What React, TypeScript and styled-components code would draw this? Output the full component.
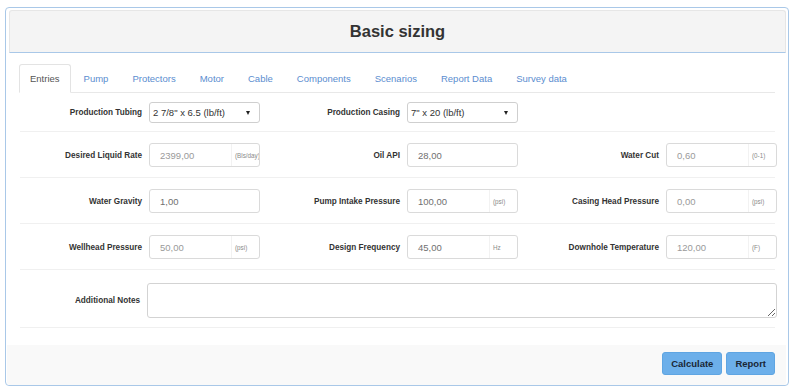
import React from "react";
import styled, { createGlobalStyle } from "styled-components";

const GlobalStyle = createGlobalStyle`
  html, body { margin: 0; padding: 0; background: #ffffff; }
  body { font-family: "Liberation Sans", Arial, sans-serif; color: #333; }
  * { box-sizing: border-box; }
`;

const Panel = styled.div`
  margin: 7px 0 0 5px;
  width: 784px;
  height: 379px;
  border: 1px solid #a9c8e8;
  border-radius: 4px;
  padding: 2px 2px 0 3px;
  display: flex;
  flex-direction: column;
  background: #fff;
`;

const Header = styled.div`
  height: 43px;
  background: #f4f4f4;
  border: 1px solid #e6e6e6;
  border-bottom: 1px solid #a9c8e8;
  border-radius: 3px 3px 0 0;
  display: flex;
  align-items: center;
  justify-content: center;
`;

const Title = styled.h1`
  margin: 0;
  font-size: 16.5px;
  font-weight: bold;
  color: #333;
`;

const Body = styled.div`
  padding: 11px 11px 0 10px;
  flex: 1;
`;

const TabBar = styled.ul`
  list-style: none;
  margin: 0;
  padding: 0;
  display: flex;
  border-bottom: 1px solid #e8e8e8;
`;

const Tab = styled.li<{ $active?: boolean }>`
  padding: 7px 10px;
  line-height: 13px;
  font-size: 9.5px;
  margin: 0 2px -1px 0;
  border: 1px solid ${(p) => (p.$active ? "#e3e3e3" : "transparent")};
  border-bottom-color: ${(p) => (p.$active ? "#fff" : "transparent")};
  border-radius: 3px 3px 0 0;
  background: ${(p) => (p.$active ? "#fff" : "transparent")};
  color: ${(p) => (p.$active ? "#555" : "#5b8dcf")};
`;

const Form = styled.div`
  padding-left: 1px;
  margin-bottom: 17px;
`;

const Row = styled.div<{ $pad: string }>`
  display: grid;
  grid-template-columns: 240px 258px 1fr;
  padding: ${(p) => p.$pad};
  border-bottom: 1px solid #f0f0f0;
`;

const Field = styled.div`
  display: flex;
  justify-content: flex-end;
  align-items: center;
  gap: 7px;
`;

const Label = styled.label`
  font-size: 8.2px;
  font-weight: bold;
  color: #333;
  white-space: nowrap;
`;

const SelectBox = styled.div`
  width: 111px;
  height: 21px;
  border: 1px solid #cfcfcf;
  border-radius: 3px;
  display: flex;
  align-items: center;
  justify-content: space-between;
  padding: 0 9px 0 3px;
  font-size: 9.5px;
  color: #333;
  background: #fff;
`;

const Arrow = styled.span`
  width: 0;
  height: 0;
  border-left: 2.5px solid transparent;
  border-right: 2.5px solid transparent;
  border-top: 4px solid #222;
`;

const InputGroup = styled.div<{ $wide?: boolean }>`
  width: 111px;
  height: 24px;
  border: 1px solid #dadada;
  border-radius: 3px;
  display: flex;
  align-items: stretch;
  background: #fff;
  margin-right: ${(p) => (p.$wide ? "-2px" : "0")};
`;

const Value = styled.span<{ $muted?: boolean }>`
  flex: 1;
  display: flex;
  align-items: center;
  padding-left: 10px;
  font-size: 9.5px;
  color: ${(p) => (p.$muted ? "#9a9a9a" : "#707070")};
`;

const Unit = styled.span`
  width: 28px;
  border-left: 1px solid #f2f2f2;
  display: flex;
  align-items: center;
  padding-left: 3px;
  font-size: 6.3px;
  color: #8a8a8a;
  white-space: nowrap;
  overflow: hidden;
`;

const NotesRow = styled.div`
  display: flex;
  align-items: center;
  gap: 7px;
  padding: 13px 0 9px;
  border-bottom: 1px solid #f0f0f0;
`;

const NotesLabel = styled(Label)`
  width: 120px;
  text-align: right;
`;

const Notes = styled.textarea`
  flex: 1;
  height: 35px;
  margin-right: -2px;
  border: 1px solid #d3d3d3;
  border-radius: 3px;
  resize: vertical;
  font-family: inherit;
  outline: none;
`;

const Footer = styled.div`
  height: 40px;
  margin-left: -2px;
  background: #f9f9f9;
  display: flex;
  justify-content: flex-end;
  align-items: flex-start;
  gap: 4px;
  padding: 7px 11px 0 0;
  border-radius: 0 0 3px 3px;
`;

const Button = styled.button`
  height: 23px;
  padding: 0 8px;
  border: 1px solid #5fa5e2;
  border-radius: 3px;
  background: #6cafea;
  color: #1a2736;
  font-family: "Liberation Sans", Arial, sans-serif;
  font-size: 9.5px;
  font-weight: bold;
`;

type F = { label: string; value: string; unit?: string; muted?: boolean };

const Input = ({ f, wide }: { f: F; wide?: boolean }) => (
  <Field>
    <Label>{f.label}</Label>
    <InputGroup $wide={wide}>
      <Value $muted={f.muted}>{f.value}</Value>
      {f.unit && <Unit>{f.unit}</Unit>}
    </InputGroup>
  </Field>
);

const rows: F[][] = [
  [
    { label: "Desired Liquid Rate", value: "2399,00", unit: "(Bls/day)", muted: true },
    { label: "Oil API", value: "28,00" },
    { label: "Water Cut", value: "0,60", unit: "(0-1)", muted: true },
  ],
  [
    { label: "Water Gravity", value: "1,00" },
    { label: "Pump Intake Pressure", value: "100,00", unit: "(psi)" },
    { label: "Casing Head Pressure", value: "0,00", unit: "(psi)", muted: true },
  ],
  [
    { label: "Wellhead Pressure", value: "50,00", unit: "(psi)", muted: true },
    { label: "Design Frequency", value: "45,00", unit: "Hz" },
    { label: "Downhole Temperature", value: "120,00", unit: "(F)", muted: true },
  ],
];

const tabs = ["Entries", "Pump", "Protectors", "Motor", "Cable", "Components", "Scenarios", "Report Data", "Survey data"];

export default function App() {
  return (
    <>
      <GlobalStyle />
      <Panel>
        <Header>
          <Title>Basic sizing</Title>
        </Header>
        <Body>
          <TabBar>
            {tabs.map((t, i) => (
              <Tab key={t} $active={i === 0}>
                {t}
              </Tab>
            ))}
          </TabBar>
          <Form>
            <Row $pad="9px 0 8px">
              <Field>
                <Label>Production Tubing</Label>
                <SelectBox>
                  <span>2 7/8" x 6.5 (lb/ft)</span>
                  <Arrow />
                </SelectBox>
              </Field>
              <Field>
                <Label>Production Casing</Label>
                <SelectBox>
                  <span>7" x 20 (lb/ft)</span>
                  <Arrow />
                </SelectBox>
              </Field>
              <div />
            </Row>
            {rows.map((r, i) => (
              <Row key={i} $pad="11px 0 10px">
                <Input f={r[0]} />
                <Input f={r[1]} />
                <Input f={r[2]} wide />
              </Row>
            ))}
            <NotesRow>
              <NotesLabel>Additional Notes</NotesLabel>
              <Notes />
            </NotesRow>
          </Form>
        </Body>
        <Footer>
          <Button>Calculate</Button>
          <Button>Report</Button>
        </Footer>
      </Panel>
    </>
  );
}
